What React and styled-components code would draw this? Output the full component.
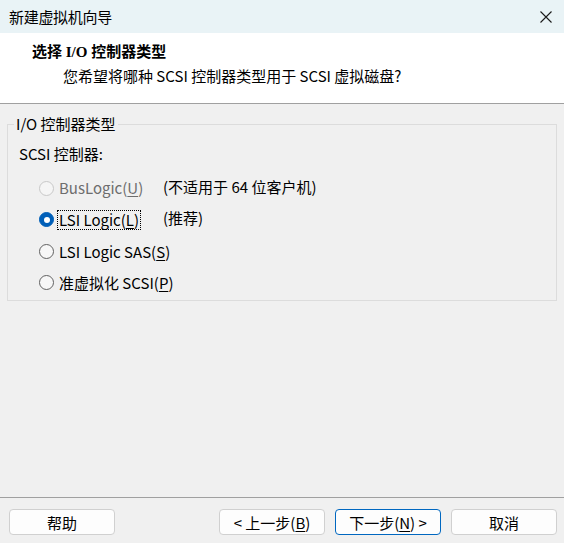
import React from "react";
import styled, { createGlobalStyle } from "styled-components";

const Global = createGlobalStyle`
  html, body { margin: 0; padding: 0; }
  body {
    width: 564px; height: 543px; overflow: hidden;
    font-family: "Noto Sans CJK SC", "Noto Sans", sans-serif;
    font-size: 15px; color: #000; background: #f0f0f0;
  }
`;

const Window = styled.div`
  width: 564px; height: 543px;
  display: flex; flex-direction: column;
  background: #f0f0f0;
`;

const TitleBar = styled.div`
  height: 33px; flex: none;
  display: flex; align-items: center; justify-content: space-between;
  padding: 0 12px 0 9px;
  background: #e9f3f6;
  line-height: 1;
`;

const TitleText = styled.span`
  font-size: 15px; letter-spacing: -0.3px;
`;

const Header = styled.div`
  height: 71px; flex: none;
  background: #fff;
  border-bottom: 1px solid #a0a0a0;
  display: flex; flex-direction: column;
  padding: 9px 0 0 32px;
  box-sizing: border-box;
`;

const HeaderTitle = styled.div`
  font-family: "Liberation Serif", "Noto Sans CJK SC", serif;
  font-weight: bold; font-size: 15px; line-height: 20px;
  height: 22px;
`;

const HeaderSub = styled.div`
  margin-left: 31px; line-height: 20px; margin-top: 2px;
`;

const Body = styled.div`
  flex: 1;
  padding: 10px 7px 0 7px;
`;

const Group = styled.fieldset`
  margin: 0; border: 1px solid #dcdcdc; border-radius: 0;
  padding: 0 0 9px 11px; height: 187px; box-sizing: border-box;
`;

const Legend = styled.legend`
  margin-left: -5px; padding: 0 2px; line-height: 20px;
`;

const SubLabel = styled.div`
  line-height: 20px; margin-top: 10px;
`;

const Options = styled.div`
  display: grid;
  grid-template-columns: 124px auto;
  margin-left: 20px; margin-top: 9px;
`;

const Choice = styled.label`
  display: flex; align-items: center; gap: 4px;
  white-space: nowrap;
  grid-column: ${p => (p.$wide ? "1 / span 2" : "auto")};
  height: ${p => p.$h}px;
  color: ${p => (p.$disabled ? "#6d6d6d" : "#000")};
`;

const Radio = styled.span`
  width: 15px; height: 15px; box-sizing: border-box; border-radius: 50%;
  flex: none; position: relative;
  border: 1px solid ${p => (p.$disabled ? "#c8c8c8" : p.$checked ? "#005fb8" : "#616161")};
  background: ${p => (p.$checked ? "#005fb8" : p.$disabled ? "#f5f5f5" : "#f7f7f7")};
  &::after {
    content: "";
    display: ${p => (p.$checked ? "block" : "none")};
    position: absolute; left: 3.5px; top: 3.5px; width: 6px; height: 6px;
    border-radius: 50%; background: #fff;
  }
`;

const ChoiceText = styled.span`
  line-height: 18px; padding: 0 1px;
  outline: ${p => (p.$focus ? "1px dotted #000" : "none")};
`;

const Note = styled.span`
  display: flex; align-items: center; height: ${p => p.$h}px;
  white-space: nowrap;
  margin-top: -2px;
`;

const Footer = styled.div`
  height: 46px; flex: none;
  border-top: 1px solid #a0a0a0;
  display: flex; align-items: flex-start;
  padding: 11px 7px 0 9px;
  box-sizing: border-box;
`;

const Button = styled.button`
  width: 106px; height: 26px;
  font: inherit; font-size: 15px; line-height: 1; color: #000;
  background: #fdfdfd;
  border: 1px solid ${p => (p.$default ? "#0067c0" : "#d0d0d0")};
  border-radius: 4px;
  padding: 0;
  margin-left: ${p => p.$gap || 0}px;
  display: flex; align-items: center; justify-content: center;
`;

const Spacer = styled.div`flex: 1;`;

const Key = styled.u`text-underline-offset: 2px;`;

const CloseIcon = () => (
  <svg width="12" height="12" viewBox="0 0 12 12">
    <path d="M0.5 0.5 L11.5 11.5 M11.5 0.5 L0.5 11.5" stroke="#1a1a1a" strokeWidth="1.1" fill="none" />
  </svg>
);

const options = [
  { label: <>BusLogic(<Key>U</Key>)</>, note: "(不适用于 64 位客户机)", disabled: true, h: 30 },
  { label: <>LSI Logic(<Key>L</Key>)</>, note: "(推荐)", checked: true, focus: true, h: 33 },
  { label: <>LSI Logic SAS(<Key>S</Key>)</>, h: 31 },
  { label: <>准虚拟化 SCSI(<Key>P</Key>)</>, h: 31 },
];

export default function App() {
  return (
    <Window>
      <Global />
      <TitleBar>
        <TitleText>新建虚拟机向导</TitleText>
        <CloseIcon />
      </TitleBar>
      <Header>
        <HeaderTitle>选择 I/O 控制器类型</HeaderTitle>
        <HeaderSub>您希望将哪种 SCSI 控制器类型用于 SCSI 虚拟磁盘?</HeaderSub>
      </Header>
      <Body>
        <Group>
          <Legend>I/O 控制器类型</Legend>
          <SubLabel>SCSI 控制器:</SubLabel>
          <Options>
            {options.map((o, i) => (
              <React.Fragment key={i}>
                <Choice $disabled={o.disabled} $h={o.h} $wide={!o.note}>
                  <Radio $checked={o.checked} $disabled={o.disabled} />
                  <ChoiceText $focus={o.focus}>{o.label}</ChoiceText>
                </Choice>
                {o.note && <Note $h={o.h}>{o.note}</Note>}
              </React.Fragment>
            ))}
          </Options>
        </Group>
      </Body>
      <Footer>
        <Button>帮助</Button>
        <Spacer />
        <Button>&lt; 上一步(<Key>B</Key>)</Button>
        <Button $default $gap={10}>下一步(<Key>N</Key>) &gt;</Button>
        <Button $gap={10}>取消</Button>
      </Footer>
    </Window>
  );
}
